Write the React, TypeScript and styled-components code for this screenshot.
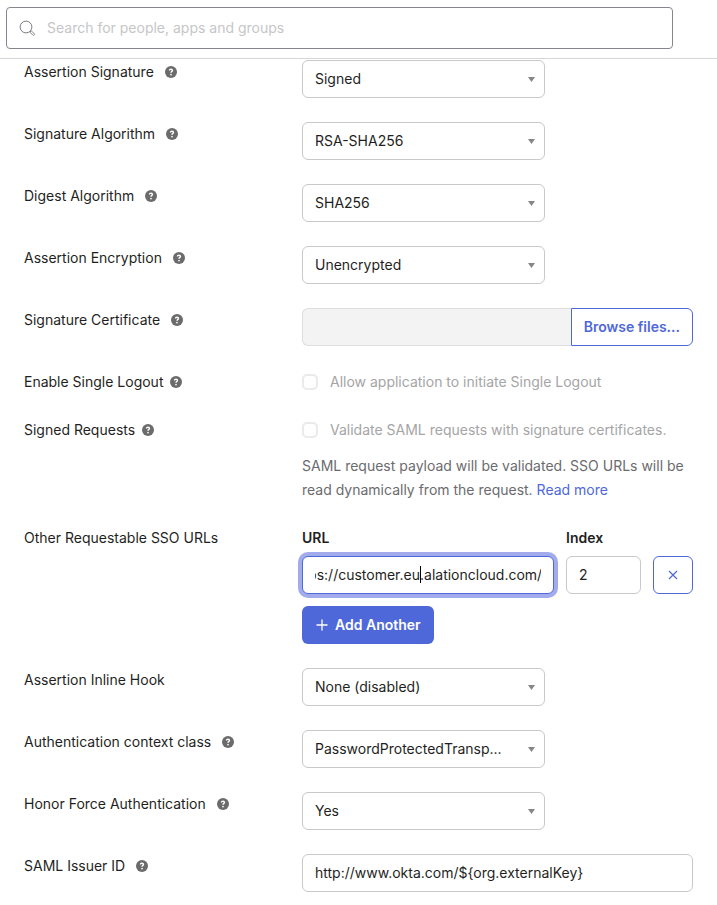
import React, { useEffect, useRef } from "react";
import styled, { createGlobalStyle, css } from "styled-components";

const color = {
  text: "#1f1f23",
  muted: "#6b6b6e",
  disabled: "#a5a5a6",
  border: "#c9c9cb",
  primary: "#4f68d9",
  ring: "#a2acec",
};

const GlobalStyle = createGlobalStyle`
  *, *::before, *::after { box-sizing: border-box; }
  body {
    margin: 0;
    background: #fff;
    color: ${color.text};
    font-family: Inter, "Liberation Sans", sans-serif;
    font-size: 14px;
    line-height: 24px;
  }
  button, input, select { font: inherit; color: inherit; margin: 0; }
`;

const Header = styled.header`
  padding: 7px 44px 9px 6px;
  border-bottom: 1px solid #d6d6d9;
`;

const SearchBox = styled.label`
  display: flex;
  align-items: center;
  gap: 11px;
  height: 42px;
  padding: 0 12px;
  border: 1px solid #85858f;
  border-radius: 4px;
`;

const SearchInput = styled.input`
  flex: 1;
  min-width: 0;
  padding: 0;
  border: 0;
  outline: 0;
  background: transparent;
  &::placeholder { color: #c6c6c8; opacity: 1; }
`;

const Form = styled.form`
  display: flex;
  flex-direction: column;
  gap: 24px;
  padding: 1px 24px 13px;
`;

const Row = styled.div`
  display: grid;
  grid-template-columns: 278px minmax(0, 1fr);
  align-items: start;
`;

const LabelCell = styled.div<{ $tight?: boolean }>`
  display: flex;
  align-items: center;
  gap: ${(p) => (p.$tight ? 7 : 11)}px;
`;

const HelpButton = styled.button`
  display: flex;
  padding: 0;
  border: 0;
  background: none;
`;

const fieldBox = css`
  width: 100%;
  height: 38px;
  border: 1px solid ${color.border};
  border-radius: 6px;
  background: #fff;
  padding: 0 12px;
  outline: 0;
`;

const TextInput = styled.input`
  ${fieldBox}
  display: block;
  padding-bottom: 2px;
  &:focus {
    border-color: ${color.primary};
    box-shadow: 0 0 0 4px ${color.ring};
  }
`;

const SelectWrap = styled.div`
  position: relative;
  width: 243px;
  max-width: 100%;
`;

const Select = styled.select`
  ${fieldBox}
  display: block;
  appearance: none;
  padding-right: 32px;
`;

const Arrow = styled.svg`
  position: absolute;
  right: 10px;
  top: 17px;
  pointer-events: none;
`;

const FileField = styled.div`
  display: flex;
`;

const FileName = styled.input`
  ${fieldBox}
  flex: 1;
  min-width: 0;
  border-color: #dedee0;
  border-right: 0;
  border-radius: 6px 0 0 6px;
  background: #f3f3f3;
`;

const OutlineButton = styled.button<{ $joined?: boolean }>`
  display: flex;
  align-items: center;
  justify-content: center;
  height: 38px;
  padding: 0 12px;
  border: 1px solid ${color.primary};
  border-radius: ${(p) => (p.$joined ? "0 6px 6px 0" : "6px")};
  background: #fff;
  color: ${color.primary};
  font-weight: 600;
  white-space: nowrap;
`;

const CheckLabel = styled.label`
  display: flex;
  align-items: center;
  gap: 12px;
  color: ${color.disabled};
`;

const Checkbox = styled.input`
  appearance: none;
  width: 16px;
  height: 16px;
  border: 2px solid #eaeaeb;
  border-radius: 5px;
  background: #fff;
`;

const Hint = styled.p`
  margin: 12px 0 0;
  color: ${color.muted};
`;

const Link = styled.a`
  color: ${color.primary};
  text-decoration: none;
`;

const UrlGrid = styled.div`
  display: grid;
  grid-template-columns: minmax(0, 1fr) 75px 40px;
  column-gap: 12px;
  row-gap: 6px;
`;

const ColumnLabel = styled.label`
  font-weight: 600;
  &:nth-child(2) { grid-column: 2 / -1; }
`;

const UrlInputWrap = styled.div`
  position: relative;
`;

const Caret = styled.span`
  position: absolute;
  right: 133px;
  top: 10px;
  width: 1px;
  height: 17px;
  background: #000;
`;

const UrlInput = styled(TextInput)`
  caret-color: transparent;
`;

const PrimaryButton = styled.button`
  display: flex;
  align-items: center;
  gap: 7px;
  height: 38px;
  margin-top: 12px;
  padding: 0 13px 0 14px;
  border: 0;
  border-radius: 6px;
  background: ${color.primary};
  color: #fff;
  font-weight: 600;
`;

const Help = ({ topic }: { topic: string }) => (
  <HelpButton type="button" aria-label={`Help: ${topic}`}>
    <svg width="12" height="12" viewBox="0 0 12 12" fill="none">
      <circle cx="6" cy="6" r="6" fill="#6b6b6b" />
      <path d="M4.5 4.6C4.5 3.7 5.1 3.2 6 3.2s1.5.5 1.5 1.2c0 1-1.5 1-1.5 2.3" stroke="#fff" strokeWidth="1.4" />
      <circle cx="6" cy="8.6" r=".85" fill="#fff" />
    </svg>
  </HelpButton>
);

type FieldProps = {
  id: string;
  label: string;
  help?: boolean;
  tight?: boolean;
  children: React.ReactNode;
};

const Field = ({ id, label, help, tight, children }: FieldProps) => (
  <Row>
    <LabelCell $tight={tight}>
      <label htmlFor={id}>{label}</label>
      {help && <Help topic={label} />}
    </LabelCell>
    <div>{children}</div>
  </Row>
);

type SelectFieldProps = { id: string; label: string; value: string; help?: boolean };

const SelectField = ({ id, label, value, help = true }: SelectFieldProps) => (
  <Field id={id} label={label} help={help}>
    <SelectWrap>
      <Select id={id} defaultValue={value}>
        <option>{value}</option>
      </Select>
      <Arrow width="7" height="5" viewBox="0 0 7 5" aria-hidden="true">
        <path d="M0 0h7L3.5 5z" fill="#86868a" />
      </Arrow>
    </SelectWrap>
  </Field>
);

export default function App() {
  const urlRef = useRef<HTMLInputElement>(null);

  useEffect(() => {
    const input = urlRef.current;
    if (!input) return;
    const caretIndex = input.value.indexOf(".alation");
    input.focus({ preventScroll: true });
    input.setSelectionRange(caretIndex, caretIndex);
    input.scrollLeft = input.scrollWidth;
    input.scrollLeft -= 1;
  }, []);

  return (
    <>
      <GlobalStyle />
      <Header>
        <SearchBox>
          <svg width="17" height="17" viewBox="0 0 17 17" fill="none" stroke="#6e6e78" aria-hidden="true">
            <circle cx="7" cy="7" r="5.9" strokeWidth=".9" />
            <path d="M10.9 12.1l1.3-1.2 3 2.5c1.1 1-.5 2.6-1.5 1.6z" strokeWidth=".8" />
          </svg>
          <SearchInput type="search" aria-label="Search" placeholder="Search for people, apps and groups" />
        </SearchBox>
      </Header>
      <Form onSubmit={(e) => e.preventDefault()}>
        <SelectField id="assertion-signature" label="Assertion Signature" value="Signed" />
        <SelectField id="signature-algorithm" label="Signature Algorithm" value="RSA-SHA256" />
        <SelectField id="digest-algorithm" label="Digest Algorithm" value="SHA256" />
        <SelectField id="assertion-encryption" label="Assertion Encryption" value="Unencrypted" />
        <Field id="certificate" label="Signature Certificate" help>
          <FileField>
            <FileName id="certificate" disabled />
            <OutlineButton type="button" $joined>Browse files...</OutlineButton>
          </FileField>
        </Field>
        <Field id="single-logout" label="Enable Single Logout" help tight>
          <CheckLabel>
            <Checkbox id="single-logout" type="checkbox" disabled />
            Allow application to initiate Single Logout
          </CheckLabel>
        </Field>
        <Field id="signed-requests" label="Signed Requests" help tight>
          <CheckLabel>
            <Checkbox id="signed-requests" type="checkbox" disabled />
            Validate SAML requests with signature certificates.
          </CheckLabel>
          <Hint>
            SAML request payload will be validated. SSO URLs will be read dynamically from the request.{" "}
            <Link href="#read-more">Read more</Link>
          </Hint>
        </Field>
        <Field id="sso-url" label="Other Requestable SSO URLs">
          <UrlGrid>
            <ColumnLabel htmlFor="sso-url">URL</ColumnLabel>
            <ColumnLabel htmlFor="sso-index">Index</ColumnLabel>
            <UrlInputWrap>
              <UrlInput id="sso-url" ref={urlRef} defaultValue="https://customer.eu.alationcloud.com/" />
              <Caret />
            </UrlInputWrap>
            <TextInput id="sso-index" defaultValue="2" />
            <OutlineButton type="button" aria-label="Remove URL">
              <svg width="10" height="10" viewBox="0 0 10 10" stroke={color.primary} strokeWidth="1.2" aria-hidden="true">
                <path d="M1 1l8 8M9 1L1 9" />
              </svg>
            </OutlineButton>
          </UrlGrid>
          <PrimaryButton type="button">
            <svg width="12" height="12" viewBox="0 0 12 12" stroke="#fff" strokeWidth="1.3" aria-hidden="true">
              <path d="M6 .5v11M.5 6h11" />
            </svg>
            Add Another
          </PrimaryButton>
        </Field>
        <SelectField id="inline-hook" label="Assertion Inline Hook" value="None (disabled)" help={false} />
        <SelectField id="context-class" label="Authentication context class" value="PasswordProtectedTransp..." />
        <SelectField id="force-authentication" label="Honor Force Authentication" value="Yes" />
        <Field id="issuer-id" label="SAML Issuer ID" help>
          <TextInput id="issuer-id" defaultValue="http://www.okta.com/${org.externalKey}" />
        </Field>
      </Form>
    </>
  );
}
